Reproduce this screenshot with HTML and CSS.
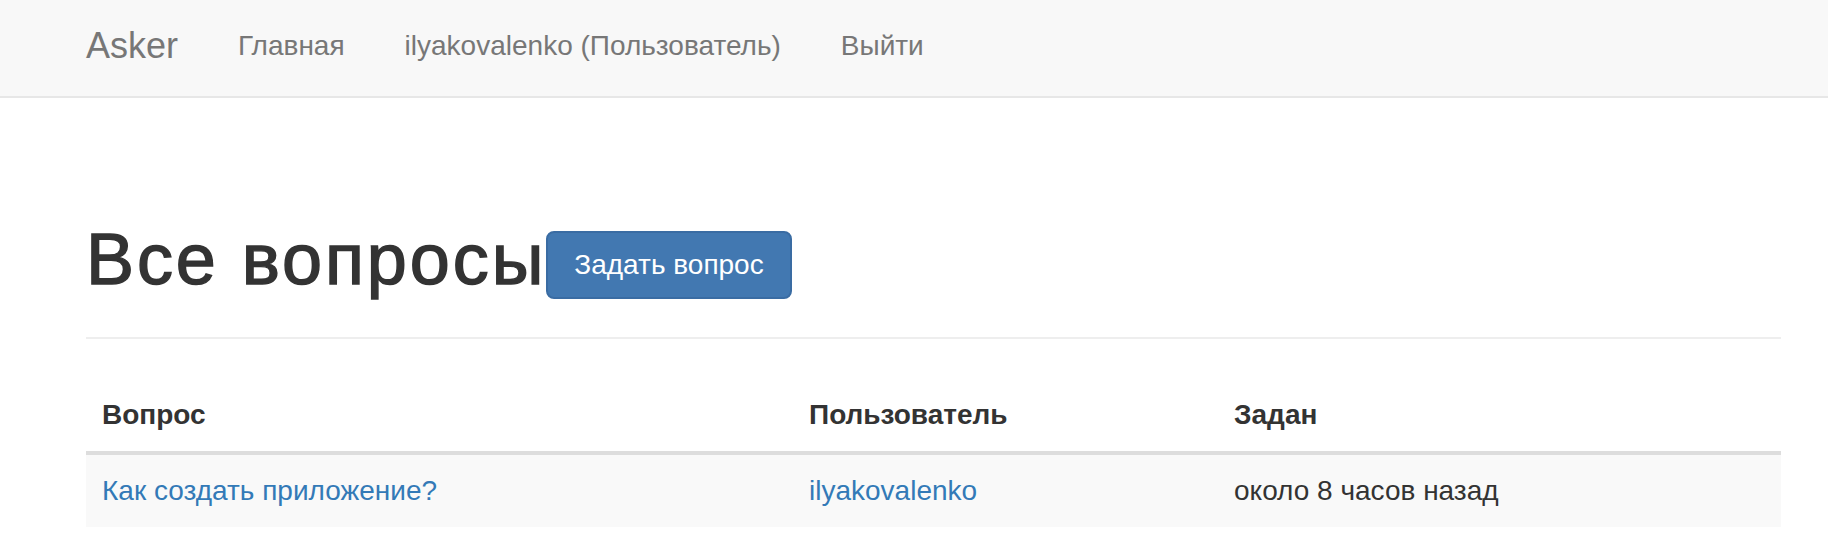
FILE: index.html
```html
<!DOCTYPE html>
<html lang="ru">
<head>
<meta charset="utf-8">
<title>Asker</title>
<link rel="stylesheet" href="styles.css">
</head>
<body>
<nav class="navbar">
  <div class="navbar-inner">
    <a class="brand" href="#">Asker</a>
    <ul class="nav">
      <li><a href="#">Главная</a></li>
      <li><a href="#">ilyakovalenko (Пользователь)</a></li>
      <li><a href="#">Выйти</a></li>
    </ul>
  </div>
</nav>
<main class="container">
  <div class="page-header">
    <h1><span class="title">Все вопросы</span><a class="btn" href="#">Задать вопрос</a></h1>
  </div>
  <table class="table">
    <colgroup>
      <col class="col-question">
      <col class="col-user">
      <col class="col-date">
    </colgroup>
    <thead>
      <tr><th>Вопрос</th><th>Пользователь</th><th>Задан</th></tr>
    </thead>
    <tbody>
      <tr>
        <td><a href="#">Как создать приложение?</a></td>
        <td><a href="#">ilyakovalenko</a></td>
        <td>около 8 часов назад</td>
      </tr>
    </tbody>
  </table>
</main>
</body>
</html>
```
FILE: styles.css
```css
html, body {
  margin: 0;
  padding: 0;
  background: #fff;
}
body {
  font-family: "Liberation Sans", Arial, Helvetica, sans-serif;
  color: #333;
  overflow: hidden;
}
a {
  text-decoration: none;
}

.navbar {
  background: #f8f8f8;
  border-bottom: 2px solid #e7e7e7;
}
.navbar-inner {
  display: flex;
  align-items: flex-start;
  padding: 26px 0 30px 56px;
}
.brand {
  display: block;
  padding: 0 30px;
  font-size: 36px;
  line-height: 40px;
  color: #777;
}
.nav {
  display: flex;
  list-style: none;
  margin: 0;
  padding: 0;
}
.nav a {
  display: block;
  padding: 0 30px;
  font-size: 28px;
  line-height: 40px;
  color: #777;
}

.container {
  margin: 0 17px 0 56px;
  padding: 0 30px;
}
.page-header {
  margin: 122px 0 40px;
  padding-bottom: 18px;
  border-bottom: 2px solid #eee;
}
.page-header h1 {
  margin: 0 0 20px;
  font-size: 72px;
  line-height: 79px;
  font-weight: 500;
  color: #333;
}
.title {
  letter-spacing: 2.9px;
  -webkit-text-stroke: 1.4px #333;
}
.btn {
  display: inline-block;
  vertical-align: middle;
  padding: 12px 26px;
  font-size: 28px;
  line-height: 40px;
  font-weight: 400;
  letter-spacing: 0;
  color: #fff;
  background: #4278b1;
  border: 2px solid #3a6ca3;
  border-radius: 8px;
}

.table {
  width: 100%;
  border-collapse: collapse;
  border-spacing: 0;
}
.col-question { width: 707px; }
.col-user { width: 425px; }
.col-date { width: auto; }
.table th,
.table td {
  padding: 16px;
  font-size: 28px;
  line-height: 40px;
  text-align: left;
  vertical-align: top;
}
.table th {
  font-weight: 700;
  vertical-align: bottom;
  border-bottom: 4px solid #ddd;
}
.table td {
  border-top: 2px solid #ddd;
}
.table tbody tr:nth-child(odd) {
  background: #f9f9f9;
}
.table td a {
  color: #337ab7;
}
```
